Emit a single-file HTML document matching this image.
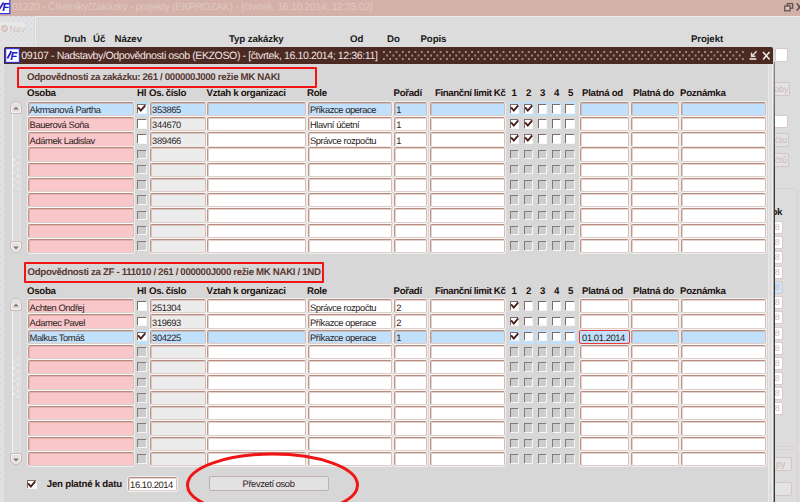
<!DOCTYPE html>
<html><head><meta charset="utf-8"><title>Odpovědnosti osob</title>
<style>
html,body{margin:0;padding:0}
body{text-rendering:geometricPrecision;width:800px;height:502px;overflow:hidden;position:relative;background:#dcdcdc;font-family:"Liberation Sans",sans-serif;font-size:8.6px;color:#222}
div{position:absolute;box-sizing:border-box;white-space:nowrap}
#top{left:0;top:0;width:800px;height:15.8px;background:#d3b1a9}
#toptitle{left:12px;top:2.2px;font-size:10.3px;letter-spacing:-0.25px;color:#e0c8c2;line-height:12px}
#leftp{left:0;top:15.8px;width:34.6px;height:487px;background-color:#e3e1e1;background-image:radial-gradient(circle at 1px 1px,rgba(140,190,235,.3) 0.5px,transparent 0.9px),radial-gradient(circle at 1px 1px,rgba(140,190,235,.25) 0.5px,transparent 0.9px);background-size:5px 6px,5px 6px;background-position:0 0,2.5px 3px;border-right:1px dotted #e3cdc9}
#mainhl{left:35.4px;top:16px;width:770px;height:490px;border-left:1px solid #ececec;border-top:1px solid #ececec}
.bh{font-weight:bold;font-size:9.7px;letter-spacing:-0.12px;color:#1a1a1a;top:34.2px;line-height:11px}
#modal{left:4px;top:47px;width:769.5px;height:460px;background:#d7d7d7}
#mline{left:774px;top:62px;width:1px;height:445px;background:linear-gradient(#8c8c8c,#707070 40px,#3c3c3c 110px,#363636)}
#mline2{left:773px;top:64px;width:1px;height:445px;background:linear-gradient(#c4c4c4,#b8b8b8 40px,#a4a4a4 110px,#a0a0a0)}
#mhl{left:772px;top:64px;width:1px;height:440px;background:#f0f0f0}
#mhl2{left:768.3px;top:64px;width:4px;height:440px;background:#dfdfdf;border-left:1px solid #e9e9e9}
#mtitle{left:0;top:0;width:769.2px;height:17px;background:#4c2a24;border-radius:2px 2px 0 0}
#mtext{left:17.2px;top:2.6px;font-size:10.6px;letter-spacing:-0.42px;color:#f0e4e1;line-height:12px}
#dots{left:378.5px;top:4px;width:362px;height:10px;
 background-image:radial-gradient(circle at 1px 1px,#a48e89 0.8px,transparent 1.15px),radial-gradient(circle at 1px 1px,#a48e89 0.8px,transparent 1.15px);
 background-size:6.3px 7px,6.3px 7px;background-position:0 0,3.15px 3.5px}
.h{font-weight:bold;font-size:9.7px;letter-spacing:-0.3px;color:#1d1210;line-height:11px}
.f{height:14.3px;margin-top:-1.1px;background:#fff;border:1px solid;border-color:#b98b7e #d6beb8 #decdc9 #bf968a;border-radius:2px;box-shadow:inset 1px 1px 0 rgba(190,146,132,.4),0 0 0 1px rgba(255,255,255,.6);font-size:9.4px;letter-spacing:-0.42px;line-height:12.6px;padding-top:1.5px;padding-left:1.1px;color:#2a1d1b;overflow:visible}
.f.pink{background:#f9c6c9}
.f.grey{background:#ececec}
.f.blue{background:#c1e0fb}
.f.redb{border:1.3px solid #e8383a;box-shadow:none;margin-left:-1px;padding-left:2.1px;padding-right:0;min-width:50.5px}
.curbg{width:11.2px;height:14.4px;background:#c1e0fb}
.cb{width:8.8px;height:8.6px;background:#fff;border-top:1.2px solid #7d6b68;border-left:1.2px solid #7d6b68;box-shadow:1px 1px 0 #f6f6f6}
.cb svg{position:absolute;left:-1px;top:-1px}
.cb.dis{background:#cdcdcd;border-color:#857a78;border-width:1.4px}
.redrect{border:2.4px solid #f01414;border-radius:1px}
.sect{font-weight:bold;font-size:9.7px;letter-spacing:-0.33px;color:#5a3933;line-height:11px}
.sb{left:9.8px;width:12.5px}
.trk{left:1.8px;top:8px;bottom:8px;width:9.8px;background:#dcdcdc;border-left:1px solid #f3f3f3;border-right:1px solid #e1e1e1}
.sbb{left:0;width:12.5px;height:12.3px;background:#e2e2e2;border:1px solid #cdb9b5;border-radius:6px 6px 2px 2px;box-shadow:inset 0 0 0 1px #f3f3f3}
.sbb.dn{border-radius:2px 2px 6px 6px}
.sbb svg{position:absolute;left:0.4px;top:0.4px}
.grip{left:2px;top:34%;width:5px;height:30%;background-image:radial-gradient(circle at 1px 1px,#f2f2f2 0.8px,transparent 1.1px);background-size:3px 3px}
.bgf{background:#fff;border:1px solid #dcc9c5;border-radius:2px;color:#c9b7b4;font-size:9px;line-height:11px;padding-left:1px;overflow:hidden}
.bgb{background:#e3e3e3;border:1px solid #d5c4c0;border-radius:2px;color:#cbbab7;font-size:9px;line-height:12px;overflow:hidden}
</style></head><body>
<div id="top"></div>
<div id="toptitle">01220 - Číselníky/Zakázky - projekty (EKPROZAK) - [čtvrtek, 16.10.2014; 12:35:02]</div>
<svg style="position:absolute;left:0;top:0" width="11" height="15" viewBox="0 0 11 15"><rect x="-1" y="-1" width="10.8" height="14.6" fill="#fff" stroke="#3535e0" stroke-width="1.2"/><text x="2.2" y="11" font-family="Liberation Sans,sans-serif" font-size="11.5" font-weight="bold" font-style="italic" fill="#1c1cc8">F</text><path d="M-0.5 9 L3.5 2.5" stroke="#1c1cc8" stroke-width="1.6"/></svg>
<svg style="position:absolute;left:784px;top:2px" width="16" height="12" viewBox="0 0 16 12"><rect x="3.4" y="1.6" width="5.2" height="4.6" fill="none" stroke="#5e5250" stroke-width="1.3"/><rect x="0.8" y="4" width="5.2" height="4.8" fill="#dcc3bd" stroke="#5e5250" stroke-width="1.3"/><path d="M12.8 1.4 L18.5 8.6 M18.5 1.4 L12.8 8.6" stroke="#554947" stroke-width="1.5"/></svg>
<div id="leftp"></div><div id="mainhl"></div>
<div style="left:0;top:21.6px;width:24.5px;height:10.8px;background:#e9e8e8"></div>
<div style="left:1px;top:24.5px;width:7px;height:7px;border-radius:50%;background:#e4d2cf;border:1px solid #cbb3ae"></div>
<div style="left:9.5px;top:23.5px;font-size:8.8px;color:#c9beba;line-height:11px">Nav</div>
<div class="bh" style="left:64px">Druh</div>
<div class="bh" style="left:93px">Úč</div>
<div class="bh" style="left:114.5px">Název</div>
<div class="bh" style="left:229px">Typ zakázky</div>
<div class="bh" style="left:350px">Od</div>
<div class="bh" style="left:387px">Do</div>
<div class="bh" style="left:420.5px">Popis</div>
<div class="bh" style="left:691px">Projekt</div>

<!-- background widgets on the right edge -->
<div class="bgf" style="left:775px;top:48.3px;width:12.6px;height:13.7px"></div>
<div class="bgb" style="left:768px;top:82px;width:22px;height:14px;padding-left:5px">oby</div>
<div class="bgf" style="left:768px;top:115px;width:20px;height:13px"></div>
<div class="bgb" style="left:768px;top:133px;width:21px;height:14px;padding-left:6px">čtu</div>
<div class="bgb" style="left:768px;top:153px;width:21px;height:14px;padding-left:6px">čtů</div>
<div style="left:760px;top:188.3px;width:37.7px;height:259px;border:1px solid #dccfcc;border-radius:3px"></div>
<div class="h" style="left:771.5px;top:206.6px">ok</div>
<div class="bgf" style="left:768px;top:220.50px;width:15px;height:13px;padding-left:5.8px">8</div><div class="bgf" style="left:768px;top:235.65px;width:15px;height:13px;padding-left:5.8px">8</div><div class="bgf" style="left:768px;top:250.80px;width:15px;height:13px;padding-left:5.8px">8</div><div class="bgf" style="left:768px;top:265.95px;width:15px;height:13px;padding-left:5.8px">8</div><div class="bgf" style="left:768px;top:281.10px;width:15px;height:13px;padding-left:5.8px;background:#c9e3fa">8</div><div class="bgf" style="left:768px;top:296.25px;width:15px;height:13px;padding-left:5.8px">8</div><div class="bgf" style="left:768px;top:311.40px;width:15px;height:13px;padding-left:5.8px">8</div><div class="bgf" style="left:768px;top:326.55px;width:15px;height:13px;padding-left:5.8px">8</div><div class="bgf" style="left:768px;top:341.70px;width:15px;height:13px;padding-left:5.8px">8</div><div class="bgf" style="left:768px;top:356.85px;width:15px;height:13px;padding-left:5.8px">8</div><div class="bgf" style="left:768px;top:372.00px;width:15px;height:13px;padding-left:5.8px">8</div><div class="bgf" style="left:768px;top:387.15px;width:15px;height:13px;padding-left:5.8px">8</div><div class="bgf" style="left:768px;top:402.30px;width:15px;height:13px;padding-left:5.8px">8</div>
<div style="left:760px;top:449.3px;width:37.7px;height:120px;border:1px solid #dccfcc;border-radius:3px"></div>
<div class="bgb" style="left:768px;top:457px;width:24px;height:14px;padding-left:7px;">py</div>
<div class="bgb" style="left:768px;top:482px;width:24px;height:14px"></div>

<div id="modal">
<div id="mtitle"></div>
<div id="dots"></div>
<svg style="position:absolute;left:1.2px;top:1.2px" width="15" height="15" viewBox="0 0 15 15"><rect x="0.6" y="0.6" width="13.8" height="13.8" fill="#fff" stroke="#3535e0" stroke-width="1.2"/><text x="5.2" y="11.8" font-family="Liberation Sans,sans-serif" font-size="11.5" font-weight="bold" font-style="italic" fill="#1c1cc8">F</text><path d="M2.4 10.5 L6.4 3" stroke="#1c1cc8" stroke-width="1.7"/></svg>
<div id="mtext">09107 - Nadstavby/Odpovědnosti osob (EKZOSO) - [čtvrtek, 16.10.2014; 12:36:11]</div>
<svg style="position:absolute;left:743.5px;top:3px" width="24" height="12" viewBox="0 0 24 12"><path d="M8.6 1.2 L4 6 M3.4 2.6 L3.6 6.4 L7.4 6.2" fill="none" stroke="#e9dedb" stroke-width="1.4"/><path d="M1.6 9 H8.4" stroke="#e9dedb" stroke-width="1.7"/><path d="M15 2 L21.6 9.4 M21.6 2 L15 9.4" stroke="#f6f0ef" stroke-width="1.5"/></svg>
</div>

<div id="mline"></div><div id="mline2"></div><div id="mhl"></div><div id="mhl2"></div>
<!-- modal contents positioned in page coordinates -->
<div class="redrect" style="left:16.8px;top:66.8px;width:300.7px;height:20.8px"></div>
<div class="sect" style="left:27px;top:72px">Odpovědnosti za zakázku: 261 / 000000J000 režie MK NAKI</div>
<div class="sb" style="top:101.4px;height:152.1px"><div class="trk"></div>
<div class="sbb" style="top:0"><svg viewBox="0 0 10 10" width="10" height="10"><path d="M2.3 6.6 L5 3.8 L7.7 6.6 Z" fill="#84706c"/></svg></div>
<svg style="position:absolute;left:2.5px;top:53.90px" width="8" height="35.25" viewBox="0 0 8 35.25" fill="#f7f7f7"><circle cx="5.9" cy="1.50" r="0.85"/><circle cx="5.9" cy="7.95" r="0.85"/><circle cx="5.9" cy="14.40" r="0.85"/><circle cx="5.9" cy="20.85" r="0.85"/><circle cx="5.9" cy="27.30" r="0.85"/><circle cx="5.9" cy="33.75" r="0.85"/><circle cx="1.7" cy="4.72" r="0.85"/><circle cx="1.7" cy="11.17" r="0.85"/><circle cx="1.7" cy="17.62" r="0.85"/><circle cx="1.7" cy="24.07" r="0.85"/><circle cx="1.7" cy="30.52" r="0.85"/></svg>
<div class="sbb dn" style="bottom:0"><svg viewBox="0 0 10 10" width="10" height="10"><path d="M2.3 3.6 L5 6.4 L7.7 3.6 Z" fill="#84706c"/></svg></div>
</div>
<div class="h" style="left:27px;top:87.5px">Osoba</div>
<div class="h" style="left:137px;top:87.5px">Hl</div>
<div class="h" style="left:149px;top:87.5px;letter-spacing:-0.38px">Os. číslo</div>
<div class="h" style="left:206.5px;top:87.5px">Vztah k organizaci</div>
<div class="h" style="left:307px;top:87.5px">Role</div>
<div class="h" style="left:393.5px;top:87.5px">Pořadí</div>
<div class="h" style="left:435px;top:87.5px;letter-spacing:-0.42px">Finanční limit Kč</div>
<div class="h" style="left:511.5px;top:87.5px">1</div>
<div class="h" style="left:526px;top:87.5px">2</div>
<div class="h" style="left:540px;top:87.5px">3</div>
<div class="h" style="left:554px;top:87.5px">4</div>
<div class="h" style="left:568px;top:87.5px">5</div>
<div class="h" style="left:582px;top:87.5px">Platná od</div>
<div class="h" style="left:633px;top:87.5px">Platná do</div>
<div class="h" style="left:680px;top:87.5px">Poznámka</div>
<div class="curbg" style="left:137px;top:101.85px"></div>
<div class="curbg" style="left:509px;top:101.85px"></div>
<div class="curbg" style="left:522.8px;top:101.85px"></div>
<div class="curbg" style="left:536.8px;top:101.85px"></div>
<div class="curbg" style="left:550.8px;top:101.85px"></div>
<div class="curbg" style="left:564.7px;top:101.85px"></div>
<div class="f blue" style="left:27.5px;top:102.85px;width:106.2px">Akrmanová Partha</div>
<div class="cb" style="left:137px;top:103.95px"><svg viewBox="0 0 9 9" width="9" height="9"><path d="M1.1 3.4 L3.8 6.5 L8.3 1.3" fill="none" stroke="#4a1f1a" stroke-width="1.9"/></svg></div>
<div class="f blue" style="left:150px;top:102.85px;width:55.89999999999999px">353865</div>
<div class="f blue" style="left:207.3px;top:102.85px;width:99.09999999999998px"></div>
<div class="f blue" style="left:307.8px;top:102.85px;width:84.29999999999997px">Příkazce operace</div>
<div class="f blue" style="left:394.2px;top:102.85px;width:33.300000000000026px">1</div>
<div class="f blue" style="left:429.6px;top:102.85px;width:75.7px"></div>
<div class="cb" style="left:509.7px;top:103.95px"><svg viewBox="0 0 9 9" width="9" height="9"><path d="M1.1 3.4 L3.8 6.5 L8.3 1.3" fill="none" stroke="#4a1f1a" stroke-width="1.9"/></svg></div>
<div class="cb" style="left:523.5px;top:103.95px"><svg viewBox="0 0 9 9" width="9" height="9"><path d="M1.1 3.4 L3.8 6.5 L8.3 1.3" fill="none" stroke="#4a1f1a" stroke-width="1.9"/></svg></div>
<div class="cb" style="left:537.5px;top:103.95px"></div>
<div class="cb" style="left:551.5px;top:103.95px"></div>
<div class="cb" style="left:565.4px;top:103.95px"></div>
<div class="f blue" style="left:580px;top:102.85px;width:48.90000000000005px"></div>
<div class="f blue" style="left:631px;top:102.85px;width:47.99999999999996px"></div>
<div class="f blue" style="left:681px;top:102.85px;width:85.2px"></div>
<div class="f pink" style="left:27.5px;top:118.08px;width:106.2px">Bauerová Soňa</div>
<div class="cb" style="left:137px;top:119.18px"></div>
<div class="f grey" style="left:150px;top:118.08px;width:55.89999999999999px">344670</div>
<div class="f" style="left:207.3px;top:118.08px;width:99.09999999999998px"></div>
<div class="f" style="left:307.8px;top:118.08px;width:84.29999999999997px">Hlavní účetní</div>
<div class="f" style="left:394.2px;top:118.08px;width:33.300000000000026px">1</div>
<div class="f" style="left:429.6px;top:118.08px;width:75.7px"></div>
<div class="cb" style="left:509.7px;top:119.18px"><svg viewBox="0 0 9 9" width="9" height="9"><path d="M1.1 3.4 L3.8 6.5 L8.3 1.3" fill="none" stroke="#4a1f1a" stroke-width="1.9"/></svg></div>
<div class="cb" style="left:523.5px;top:119.18px"><svg viewBox="0 0 9 9" width="9" height="9"><path d="M1.1 3.4 L3.8 6.5 L8.3 1.3" fill="none" stroke="#4a1f1a" stroke-width="1.9"/></svg></div>
<div class="cb" style="left:537.5px;top:119.18px"></div>
<div class="cb" style="left:551.5px;top:119.18px"></div>
<div class="cb" style="left:565.4px;top:119.18px"></div>
<div class="f" style="left:580px;top:118.08px;width:48.90000000000005px"></div>
<div class="f" style="left:631px;top:118.08px;width:47.99999999999996px"></div>
<div class="f" style="left:681px;top:118.08px;width:85.2px"></div>
<div class="f pink" style="left:27.5px;top:133.31px;width:106.2px">Adámek Ladislav</div>
<div class="cb" style="left:137px;top:134.41px"></div>
<div class="f grey" style="left:150px;top:133.31px;width:55.89999999999999px">389466</div>
<div class="f" style="left:207.3px;top:133.31px;width:99.09999999999998px"></div>
<div class="f" style="left:307.8px;top:133.31px;width:84.29999999999997px">Správce rozpočtu</div>
<div class="f" style="left:394.2px;top:133.31px;width:33.300000000000026px">1</div>
<div class="f" style="left:429.6px;top:133.31px;width:75.7px"></div>
<div class="cb" style="left:509.7px;top:134.41px"><svg viewBox="0 0 9 9" width="9" height="9"><path d="M1.1 3.4 L3.8 6.5 L8.3 1.3" fill="none" stroke="#4a1f1a" stroke-width="1.9"/></svg></div>
<div class="cb" style="left:523.5px;top:134.41px"><svg viewBox="0 0 9 9" width="9" height="9"><path d="M1.1 3.4 L3.8 6.5 L8.3 1.3" fill="none" stroke="#4a1f1a" stroke-width="1.9"/></svg></div>
<div class="cb" style="left:537.5px;top:134.41px"></div>
<div class="cb" style="left:551.5px;top:134.41px"></div>
<div class="cb" style="left:565.4px;top:134.41px"></div>
<div class="f" style="left:580px;top:133.31px;width:48.90000000000005px"></div>
<div class="f" style="left:631px;top:133.31px;width:47.99999999999996px"></div>
<div class="f" style="left:681px;top:133.31px;width:85.2px"></div>
<div class="f pink" style="left:27.5px;top:148.54px;width:106.2px"></div>
<div class="cb dis" style="left:137px;top:149.64px"></div>
<div class="f grey" style="left:150px;top:148.54px;width:55.89999999999999px"></div>
<div class="f" style="left:207.3px;top:148.54px;width:99.09999999999998px"></div>
<div class="f" style="left:307.8px;top:148.54px;width:84.29999999999997px"></div>
<div class="f" style="left:394.2px;top:148.54px;width:33.300000000000026px"></div>
<div class="f" style="left:429.6px;top:148.54px;width:75.7px"></div>
<div class="cb dis" style="left:509.7px;top:149.64px"></div>
<div class="cb dis" style="left:523.5px;top:149.64px"></div>
<div class="cb dis" style="left:537.5px;top:149.64px"></div>
<div class="cb dis" style="left:551.5px;top:149.64px"></div>
<div class="cb dis" style="left:565.4px;top:149.64px"></div>
<div class="f" style="left:580px;top:148.54px;width:48.90000000000005px"></div>
<div class="f" style="left:631px;top:148.54px;width:47.99999999999996px"></div>
<div class="f" style="left:681px;top:148.54px;width:85.2px"></div>
<div class="f pink" style="left:27.5px;top:163.77px;width:106.2px"></div>
<div class="cb dis" style="left:137px;top:164.87px"></div>
<div class="f grey" style="left:150px;top:163.77px;width:55.89999999999999px"></div>
<div class="f" style="left:207.3px;top:163.77px;width:99.09999999999998px"></div>
<div class="f" style="left:307.8px;top:163.77px;width:84.29999999999997px"></div>
<div class="f" style="left:394.2px;top:163.77px;width:33.300000000000026px"></div>
<div class="f" style="left:429.6px;top:163.77px;width:75.7px"></div>
<div class="cb dis" style="left:509.7px;top:164.87px"></div>
<div class="cb dis" style="left:523.5px;top:164.87px"></div>
<div class="cb dis" style="left:537.5px;top:164.87px"></div>
<div class="cb dis" style="left:551.5px;top:164.87px"></div>
<div class="cb dis" style="left:565.4px;top:164.87px"></div>
<div class="f" style="left:580px;top:163.77px;width:48.90000000000005px"></div>
<div class="f" style="left:631px;top:163.77px;width:47.99999999999996px"></div>
<div class="f" style="left:681px;top:163.77px;width:85.2px"></div>
<div class="f pink" style="left:27.5px;top:179.00px;width:106.2px"></div>
<div class="cb dis" style="left:137px;top:180.10px"></div>
<div class="f grey" style="left:150px;top:179.00px;width:55.89999999999999px"></div>
<div class="f" style="left:207.3px;top:179.00px;width:99.09999999999998px"></div>
<div class="f" style="left:307.8px;top:179.00px;width:84.29999999999997px"></div>
<div class="f" style="left:394.2px;top:179.00px;width:33.300000000000026px"></div>
<div class="f" style="left:429.6px;top:179.00px;width:75.7px"></div>
<div class="cb dis" style="left:509.7px;top:180.10px"></div>
<div class="cb dis" style="left:523.5px;top:180.10px"></div>
<div class="cb dis" style="left:537.5px;top:180.10px"></div>
<div class="cb dis" style="left:551.5px;top:180.10px"></div>
<div class="cb dis" style="left:565.4px;top:180.10px"></div>
<div class="f" style="left:580px;top:179.00px;width:48.90000000000005px"></div>
<div class="f" style="left:631px;top:179.00px;width:47.99999999999996px"></div>
<div class="f" style="left:681px;top:179.00px;width:85.2px"></div>
<div class="f pink" style="left:27.5px;top:194.23px;width:106.2px"></div>
<div class="cb dis" style="left:137px;top:195.33px"></div>
<div class="f grey" style="left:150px;top:194.23px;width:55.89999999999999px"></div>
<div class="f" style="left:207.3px;top:194.23px;width:99.09999999999998px"></div>
<div class="f" style="left:307.8px;top:194.23px;width:84.29999999999997px"></div>
<div class="f" style="left:394.2px;top:194.23px;width:33.300000000000026px"></div>
<div class="f" style="left:429.6px;top:194.23px;width:75.7px"></div>
<div class="cb dis" style="left:509.7px;top:195.33px"></div>
<div class="cb dis" style="left:523.5px;top:195.33px"></div>
<div class="cb dis" style="left:537.5px;top:195.33px"></div>
<div class="cb dis" style="left:551.5px;top:195.33px"></div>
<div class="cb dis" style="left:565.4px;top:195.33px"></div>
<div class="f" style="left:580px;top:194.23px;width:48.90000000000005px"></div>
<div class="f" style="left:631px;top:194.23px;width:47.99999999999996px"></div>
<div class="f" style="left:681px;top:194.23px;width:85.2px"></div>
<div class="f pink" style="left:27.5px;top:209.46px;width:106.2px"></div>
<div class="cb dis" style="left:137px;top:210.56px"></div>
<div class="f grey" style="left:150px;top:209.46px;width:55.89999999999999px"></div>
<div class="f" style="left:207.3px;top:209.46px;width:99.09999999999998px"></div>
<div class="f" style="left:307.8px;top:209.46px;width:84.29999999999997px"></div>
<div class="f" style="left:394.2px;top:209.46px;width:33.300000000000026px"></div>
<div class="f" style="left:429.6px;top:209.46px;width:75.7px"></div>
<div class="cb dis" style="left:509.7px;top:210.56px"></div>
<div class="cb dis" style="left:523.5px;top:210.56px"></div>
<div class="cb dis" style="left:537.5px;top:210.56px"></div>
<div class="cb dis" style="left:551.5px;top:210.56px"></div>
<div class="cb dis" style="left:565.4px;top:210.56px"></div>
<div class="f" style="left:580px;top:209.46px;width:48.90000000000005px"></div>
<div class="f" style="left:631px;top:209.46px;width:47.99999999999996px"></div>
<div class="f" style="left:681px;top:209.46px;width:85.2px"></div>
<div class="f pink" style="left:27.5px;top:224.69px;width:106.2px"></div>
<div class="cb dis" style="left:137px;top:225.79px"></div>
<div class="f grey" style="left:150px;top:224.69px;width:55.89999999999999px"></div>
<div class="f" style="left:207.3px;top:224.69px;width:99.09999999999998px"></div>
<div class="f" style="left:307.8px;top:224.69px;width:84.29999999999997px"></div>
<div class="f" style="left:394.2px;top:224.69px;width:33.300000000000026px"></div>
<div class="f" style="left:429.6px;top:224.69px;width:75.7px"></div>
<div class="cb dis" style="left:509.7px;top:225.79px"></div>
<div class="cb dis" style="left:523.5px;top:225.79px"></div>
<div class="cb dis" style="left:537.5px;top:225.79px"></div>
<div class="cb dis" style="left:551.5px;top:225.79px"></div>
<div class="cb dis" style="left:565.4px;top:225.79px"></div>
<div class="f" style="left:580px;top:224.69px;width:48.90000000000005px"></div>
<div class="f" style="left:631px;top:224.69px;width:47.99999999999996px"></div>
<div class="f" style="left:681px;top:224.69px;width:85.2px"></div>
<div class="f pink" style="left:27.5px;top:239.92px;width:106.2px"></div>
<div class="cb dis" style="left:137px;top:241.02px"></div>
<div class="f grey" style="left:150px;top:239.92px;width:55.89999999999999px"></div>
<div class="f" style="left:207.3px;top:239.92px;width:99.09999999999998px"></div>
<div class="f" style="left:307.8px;top:239.92px;width:84.29999999999997px"></div>
<div class="f" style="left:394.2px;top:239.92px;width:33.300000000000026px"></div>
<div class="f" style="left:429.6px;top:239.92px;width:75.7px"></div>
<div class="cb dis" style="left:509.7px;top:241.02px"></div>
<div class="cb dis" style="left:523.5px;top:241.02px"></div>
<div class="cb dis" style="left:537.5px;top:241.02px"></div>
<div class="cb dis" style="left:551.5px;top:241.02px"></div>
<div class="cb dis" style="left:565.4px;top:241.02px"></div>
<div class="f" style="left:580px;top:239.92px;width:48.90000000000005px"></div>
<div class="f" style="left:631px;top:239.92px;width:47.99999999999996px"></div>
<div class="f" style="left:681px;top:239.92px;width:85.2px"></div>

<div class="redrect" style="left:23.5px;top:261.5px;width:300.5px;height:21.5px"></div>
<div class="sect" style="left:27.5px;top:267px">Odpovědnosti za ZF - 111010 / 261 / 000000J000 režie MK NAKI / 1ND</div>
<div class="sb" style="top:298.4px;height:167.10000000000002px"><div class="trk"></div>
<div class="sbb" style="top:0"><svg viewBox="0 0 10 10" width="10" height="10"><path d="M2.3 6.6 L5 3.8 L7.7 6.6 Z" fill="#84706c"/></svg></div>
<svg style="position:absolute;left:2.5px;top:58.90px" width="8" height="41.70" viewBox="0 0 8 41.70" fill="#f7f7f7"><circle cx="5.9" cy="1.50" r="0.85"/><circle cx="5.9" cy="7.95" r="0.85"/><circle cx="5.9" cy="14.40" r="0.85"/><circle cx="5.9" cy="20.85" r="0.85"/><circle cx="5.9" cy="27.30" r="0.85"/><circle cx="5.9" cy="33.75" r="0.85"/><circle cx="5.9" cy="40.20" r="0.85"/><circle cx="1.7" cy="4.72" r="0.85"/><circle cx="1.7" cy="11.17" r="0.85"/><circle cx="1.7" cy="17.62" r="0.85"/><circle cx="1.7" cy="24.07" r="0.85"/><circle cx="1.7" cy="30.52" r="0.85"/><circle cx="1.7" cy="36.97" r="0.85"/></svg>
<div class="sbb dn" style="bottom:0"><svg viewBox="0 0 10 10" width="10" height="10"><path d="M2.3 3.6 L5 6.4 L7.7 3.6 Z" fill="#84706c"/></svg></div>
</div>
<div class="h" style="left:27px;top:285.8px">Osoba</div>
<div class="h" style="left:137px;top:285.8px">Hl</div>
<div class="h" style="left:149px;top:285.8px;letter-spacing:-0.38px">Os. číslo</div>
<div class="h" style="left:206.5px;top:285.8px">Vztah k organizaci</div>
<div class="h" style="left:307px;top:285.8px">Role</div>
<div class="h" style="left:393.5px;top:285.8px">Pořadí</div>
<div class="h" style="left:435px;top:285.8px;letter-spacing:-0.42px">Finanční limit Kč</div>
<div class="h" style="left:511.5px;top:285.8px">1</div>
<div class="h" style="left:526px;top:285.8px">2</div>
<div class="h" style="left:540px;top:285.8px">3</div>
<div class="h" style="left:554px;top:285.8px">4</div>
<div class="h" style="left:568px;top:285.8px">5</div>
<div class="h" style="left:582px;top:285.8px">Platná od</div>
<div class="h" style="left:633px;top:285.8px">Platná do</div>
<div class="h" style="left:680px;top:285.8px">Poznámka</div>
<div class="f pink" style="left:27.5px;top:300.15px;width:106.2px">Achten Ondřej</div>
<div class="cb" style="left:137px;top:301.25px"></div>
<div class="f grey" style="left:150px;top:300.15px;width:55.89999999999999px">251304</div>
<div class="f" style="left:207.3px;top:300.15px;width:99.09999999999998px"></div>
<div class="f" style="left:307.8px;top:300.15px;width:84.29999999999997px">Správce rozpočtu</div>
<div class="f" style="left:394.2px;top:300.15px;width:33.300000000000026px">2</div>
<div class="f" style="left:429.6px;top:300.15px;width:75.7px"></div>
<div class="cb" style="left:509.7px;top:301.25px"><svg viewBox="0 0 9 9" width="9" height="9"><path d="M1.1 3.4 L3.8 6.5 L8.3 1.3" fill="none" stroke="#4a1f1a" stroke-width="1.9"/></svg></div>
<div class="cb" style="left:523.5px;top:301.25px"></div>
<div class="cb" style="left:537.5px;top:301.25px"></div>
<div class="cb" style="left:551.5px;top:301.25px"></div>
<div class="cb" style="left:565.4px;top:301.25px"></div>
<div class="f" style="left:580px;top:300.15px;width:48.90000000000005px"></div>
<div class="f" style="left:631px;top:300.15px;width:47.99999999999996px"></div>
<div class="f" style="left:681px;top:300.15px;width:85.2px"></div>
<div class="f pink" style="left:27.5px;top:315.43px;width:106.2px">Adamec Pavel</div>
<div class="cb" style="left:137px;top:316.53px"></div>
<div class="f grey" style="left:150px;top:315.43px;width:55.89999999999999px">319693</div>
<div class="f" style="left:207.3px;top:315.43px;width:99.09999999999998px"></div>
<div class="f" style="left:307.8px;top:315.43px;width:84.29999999999997px">Příkazce operace</div>
<div class="f" style="left:394.2px;top:315.43px;width:33.300000000000026px">2</div>
<div class="f" style="left:429.6px;top:315.43px;width:75.7px"></div>
<div class="cb" style="left:509.7px;top:316.53px"><svg viewBox="0 0 9 9" width="9" height="9"><path d="M1.1 3.4 L3.8 6.5 L8.3 1.3" fill="none" stroke="#4a1f1a" stroke-width="1.9"/></svg></div>
<div class="cb" style="left:523.5px;top:316.53px"></div>
<div class="cb" style="left:537.5px;top:316.53px"></div>
<div class="cb" style="left:551.5px;top:316.53px"></div>
<div class="cb" style="left:565.4px;top:316.53px"></div>
<div class="f" style="left:580px;top:315.43px;width:48.90000000000005px"></div>
<div class="f" style="left:631px;top:315.43px;width:47.99999999999996px"></div>
<div class="f" style="left:681px;top:315.43px;width:85.2px"></div>
<div class="curbg" style="left:137px;top:329.71px"></div>
<div class="curbg" style="left:509px;top:329.71px"></div>
<div class="curbg" style="left:522.8px;top:329.71px"></div>
<div class="curbg" style="left:536.8px;top:329.71px"></div>
<div class="curbg" style="left:550.8px;top:329.71px"></div>
<div class="curbg" style="left:564.7px;top:329.71px"></div>
<div class="f blue" style="left:27.5px;top:330.71px;width:106.2px">Malkus Tomáš</div>
<div class="cb" style="left:137px;top:331.81px"><svg viewBox="0 0 9 9" width="9" height="9"><path d="M1.1 3.4 L3.8 6.5 L8.3 1.3" fill="none" stroke="#4a1f1a" stroke-width="1.9"/></svg></div>
<div class="f blue" style="left:150px;top:330.71px;width:55.89999999999999px">304225</div>
<div class="f blue" style="left:207.3px;top:330.71px;width:99.09999999999998px"></div>
<div class="f blue" style="left:307.8px;top:330.71px;width:84.29999999999997px">Příkazce operace</div>
<div class="f blue" style="left:394.2px;top:330.71px;width:33.300000000000026px">1</div>
<div class="f blue" style="left:429.6px;top:330.71px;width:75.7px"></div>
<div class="cb" style="left:509.7px;top:331.81px"><svg viewBox="0 0 9 9" width="9" height="9"><path d="M1.1 3.4 L3.8 6.5 L8.3 1.3" fill="none" stroke="#4a1f1a" stroke-width="1.9"/></svg></div>
<div class="cb" style="left:523.5px;top:331.81px"></div>
<div class="cb" style="left:537.5px;top:331.81px"></div>
<div class="cb" style="left:551.5px;top:331.81px"></div>
<div class="cb" style="left:565.4px;top:331.81px"></div>
<div class="f blue redb" style="left:580px;top:330.71px;width:48.90000000000005px">01.01.2014</div>
<div class="f blue" style="left:631px;top:330.71px;width:47.99999999999996px"></div>
<div class="f blue" style="left:681px;top:330.71px;width:85.2px"></div>
<div class="f pink" style="left:27.5px;top:345.99px;width:106.2px"></div>
<div class="cb dis" style="left:137px;top:347.09px"></div>
<div class="f grey" style="left:150px;top:345.99px;width:55.89999999999999px"></div>
<div class="f" style="left:207.3px;top:345.99px;width:99.09999999999998px"></div>
<div class="f" style="left:307.8px;top:345.99px;width:84.29999999999997px"></div>
<div class="f" style="left:394.2px;top:345.99px;width:33.300000000000026px"></div>
<div class="f" style="left:429.6px;top:345.99px;width:75.7px"></div>
<div class="cb dis" style="left:509.7px;top:347.09px"></div>
<div class="cb dis" style="left:523.5px;top:347.09px"></div>
<div class="cb dis" style="left:537.5px;top:347.09px"></div>
<div class="cb dis" style="left:551.5px;top:347.09px"></div>
<div class="cb dis" style="left:565.4px;top:347.09px"></div>
<div class="f" style="left:580px;top:345.99px;width:48.90000000000005px"></div>
<div class="f" style="left:631px;top:345.99px;width:47.99999999999996px"></div>
<div class="f" style="left:681px;top:345.99px;width:85.2px"></div>
<div class="f pink" style="left:27.5px;top:361.27px;width:106.2px"></div>
<div class="cb dis" style="left:137px;top:362.37px"></div>
<div class="f grey" style="left:150px;top:361.27px;width:55.89999999999999px"></div>
<div class="f" style="left:207.3px;top:361.27px;width:99.09999999999998px"></div>
<div class="f" style="left:307.8px;top:361.27px;width:84.29999999999997px"></div>
<div class="f" style="left:394.2px;top:361.27px;width:33.300000000000026px"></div>
<div class="f" style="left:429.6px;top:361.27px;width:75.7px"></div>
<div class="cb dis" style="left:509.7px;top:362.37px"></div>
<div class="cb dis" style="left:523.5px;top:362.37px"></div>
<div class="cb dis" style="left:537.5px;top:362.37px"></div>
<div class="cb dis" style="left:551.5px;top:362.37px"></div>
<div class="cb dis" style="left:565.4px;top:362.37px"></div>
<div class="f" style="left:580px;top:361.27px;width:48.90000000000005px"></div>
<div class="f" style="left:631px;top:361.27px;width:47.99999999999996px"></div>
<div class="f" style="left:681px;top:361.27px;width:85.2px"></div>
<div class="f pink" style="left:27.5px;top:376.55px;width:106.2px"></div>
<div class="cb dis" style="left:137px;top:377.65px"></div>
<div class="f grey" style="left:150px;top:376.55px;width:55.89999999999999px"></div>
<div class="f" style="left:207.3px;top:376.55px;width:99.09999999999998px"></div>
<div class="f" style="left:307.8px;top:376.55px;width:84.29999999999997px"></div>
<div class="f" style="left:394.2px;top:376.55px;width:33.300000000000026px"></div>
<div class="f" style="left:429.6px;top:376.55px;width:75.7px"></div>
<div class="cb dis" style="left:509.7px;top:377.65px"></div>
<div class="cb dis" style="left:523.5px;top:377.65px"></div>
<div class="cb dis" style="left:537.5px;top:377.65px"></div>
<div class="cb dis" style="left:551.5px;top:377.65px"></div>
<div class="cb dis" style="left:565.4px;top:377.65px"></div>
<div class="f" style="left:580px;top:376.55px;width:48.90000000000005px"></div>
<div class="f" style="left:631px;top:376.55px;width:47.99999999999996px"></div>
<div class="f" style="left:681px;top:376.55px;width:85.2px"></div>
<div class="f pink" style="left:27.5px;top:391.83px;width:106.2px"></div>
<div class="cb dis" style="left:137px;top:392.93px"></div>
<div class="f grey" style="left:150px;top:391.83px;width:55.89999999999999px"></div>
<div class="f" style="left:207.3px;top:391.83px;width:99.09999999999998px"></div>
<div class="f" style="left:307.8px;top:391.83px;width:84.29999999999997px"></div>
<div class="f" style="left:394.2px;top:391.83px;width:33.300000000000026px"></div>
<div class="f" style="left:429.6px;top:391.83px;width:75.7px"></div>
<div class="cb dis" style="left:509.7px;top:392.93px"></div>
<div class="cb dis" style="left:523.5px;top:392.93px"></div>
<div class="cb dis" style="left:537.5px;top:392.93px"></div>
<div class="cb dis" style="left:551.5px;top:392.93px"></div>
<div class="cb dis" style="left:565.4px;top:392.93px"></div>
<div class="f" style="left:580px;top:391.83px;width:48.90000000000005px"></div>
<div class="f" style="left:631px;top:391.83px;width:47.99999999999996px"></div>
<div class="f" style="left:681px;top:391.83px;width:85.2px"></div>
<div class="f pink" style="left:27.5px;top:407.11px;width:106.2px"></div>
<div class="cb dis" style="left:137px;top:408.21px"></div>
<div class="f grey" style="left:150px;top:407.11px;width:55.89999999999999px"></div>
<div class="f" style="left:207.3px;top:407.11px;width:99.09999999999998px"></div>
<div class="f" style="left:307.8px;top:407.11px;width:84.29999999999997px"></div>
<div class="f" style="left:394.2px;top:407.11px;width:33.300000000000026px"></div>
<div class="f" style="left:429.6px;top:407.11px;width:75.7px"></div>
<div class="cb dis" style="left:509.7px;top:408.21px"></div>
<div class="cb dis" style="left:523.5px;top:408.21px"></div>
<div class="cb dis" style="left:537.5px;top:408.21px"></div>
<div class="cb dis" style="left:551.5px;top:408.21px"></div>
<div class="cb dis" style="left:565.4px;top:408.21px"></div>
<div class="f" style="left:580px;top:407.11px;width:48.90000000000005px"></div>
<div class="f" style="left:631px;top:407.11px;width:47.99999999999996px"></div>
<div class="f" style="left:681px;top:407.11px;width:85.2px"></div>
<div class="f pink" style="left:27.5px;top:422.39px;width:106.2px"></div>
<div class="cb dis" style="left:137px;top:423.49px"></div>
<div class="f grey" style="left:150px;top:422.39px;width:55.89999999999999px"></div>
<div class="f" style="left:207.3px;top:422.39px;width:99.09999999999998px"></div>
<div class="f" style="left:307.8px;top:422.39px;width:84.29999999999997px"></div>
<div class="f" style="left:394.2px;top:422.39px;width:33.300000000000026px"></div>
<div class="f" style="left:429.6px;top:422.39px;width:75.7px"></div>
<div class="cb dis" style="left:509.7px;top:423.49px"></div>
<div class="cb dis" style="left:523.5px;top:423.49px"></div>
<div class="cb dis" style="left:537.5px;top:423.49px"></div>
<div class="cb dis" style="left:551.5px;top:423.49px"></div>
<div class="cb dis" style="left:565.4px;top:423.49px"></div>
<div class="f" style="left:580px;top:422.39px;width:48.90000000000005px"></div>
<div class="f" style="left:631px;top:422.39px;width:47.99999999999996px"></div>
<div class="f" style="left:681px;top:422.39px;width:85.2px"></div>
<div class="f pink" style="left:27.5px;top:437.67px;width:106.2px"></div>
<div class="cb dis" style="left:137px;top:438.77px"></div>
<div class="f grey" style="left:150px;top:437.67px;width:55.89999999999999px"></div>
<div class="f" style="left:207.3px;top:437.67px;width:99.09999999999998px"></div>
<div class="f" style="left:307.8px;top:437.67px;width:84.29999999999997px"></div>
<div class="f" style="left:394.2px;top:437.67px;width:33.300000000000026px"></div>
<div class="f" style="left:429.6px;top:437.67px;width:75.7px"></div>
<div class="cb dis" style="left:509.7px;top:438.77px"></div>
<div class="cb dis" style="left:523.5px;top:438.77px"></div>
<div class="cb dis" style="left:537.5px;top:438.77px"></div>
<div class="cb dis" style="left:551.5px;top:438.77px"></div>
<div class="cb dis" style="left:565.4px;top:438.77px"></div>
<div class="f" style="left:580px;top:437.67px;width:48.90000000000005px"></div>
<div class="f" style="left:631px;top:437.67px;width:47.99999999999996px"></div>
<div class="f" style="left:681px;top:437.67px;width:85.2px"></div>
<div class="f pink" style="left:27.5px;top:452.95px;width:106.2px"></div>
<div class="cb dis" style="left:137px;top:454.05px"></div>
<div class="f grey" style="left:150px;top:452.95px;width:55.89999999999999px"></div>
<div class="f" style="left:207.3px;top:452.95px;width:99.09999999999998px"></div>
<div class="f" style="left:307.8px;top:452.95px;width:84.29999999999997px"></div>
<div class="f" style="left:394.2px;top:452.95px;width:33.300000000000026px"></div>
<div class="f" style="left:429.6px;top:452.95px;width:75.7px"></div>
<div class="cb dis" style="left:509.7px;top:454.05px"></div>
<div class="cb dis" style="left:523.5px;top:454.05px"></div>
<div class="cb dis" style="left:537.5px;top:454.05px"></div>
<div class="cb dis" style="left:551.5px;top:454.05px"></div>
<div class="cb dis" style="left:565.4px;top:454.05px"></div>
<div class="f" style="left:580px;top:452.95px;width:48.90000000000005px"></div>
<div class="f" style="left:631px;top:452.95px;width:47.99999999999996px"></div>
<div class="f" style="left:681px;top:452.95px;width:85.2px"></div>

<div class="cb" style="left:27px;top:479.5px"><svg viewBox="0 0 9 9" width="9" height="9"><path d="M1.1 3.4 L3.8 6.5 L8.3 1.3" fill="none" stroke="#4a1f1a" stroke-width="1.9"/></svg></div>
<div class="h" style="left:46.8px;top:479.1px;letter-spacing:-0.24px">Jen platné k datu</div>
<div class="f" style="left:128px;top:478px;width:48.5px">16.10.2014</div>
<div style="left:208.5px;top:475.7px;width:120px;height:15.8px;background:#e2e2e2;border:1px solid #bfb0ad;border-radius:2px;text-align:center;font-size:9.4px;letter-spacing:-0.42px;line-height:13.6px;color:#33201d">Převzetí osob</div>
<svg style="position:absolute;left:180px;top:445px" width="190" height="57" viewBox="0 0 190 57"><ellipse cx="92.5" cy="40" rx="85" ry="31" fill="none" stroke="#f01414" stroke-width="3"/></svg>
</body></html>
